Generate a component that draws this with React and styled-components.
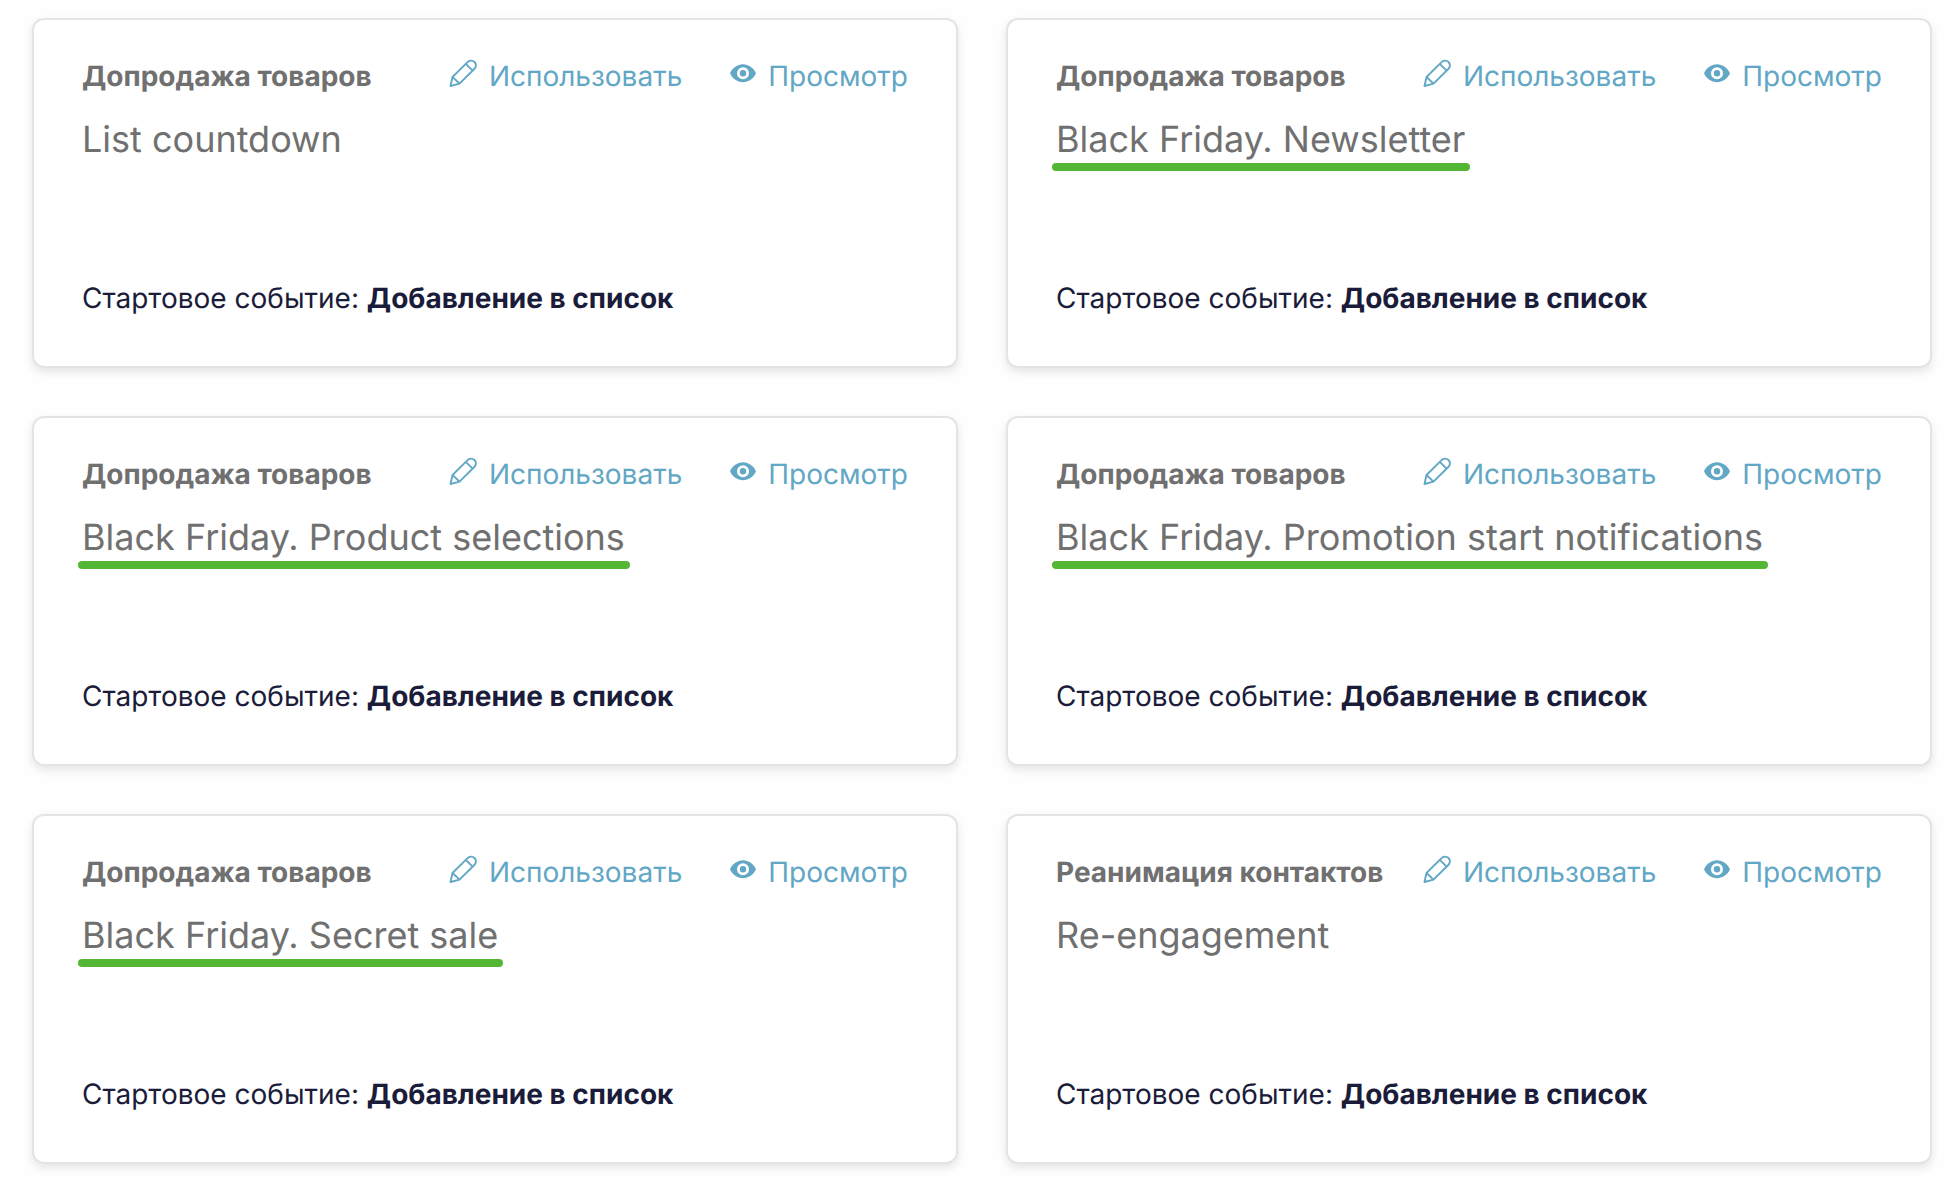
import React from "react";
import styled, { createGlobalStyle } from "styled-components";

const cards = [
  { category: "Допродажа товаров", title: "List countdown" },
  {
    category: "Допродажа товаров",
    title: "Black Friday. Newsletter",
    marked: true,
  },
  {
    category: "Допродажа товаров",
    title: "Black Friday. Product selections",
    marked: true,
  },
  {
    category: "Допродажа товаров",
    title: "Black Friday. Promotion start notifications",
    marked: true,
  },
  {
    category: "Допродажа товаров",
    title: "Black Friday. Secret sale",
    marked: true,
  },
  { category: "Реанимация контактов", title: "Re-engagement" },
];

const PencilIcon = () => (
  <Icon width="28" height="28" viewBox="0 0 28 28" aria-hidden="true">
    <g
      fill="none"
      stroke="currentColor"
      strokeWidth="1.9"
      strokeLinejoin="round"
    >
      <path d="M1.500 27 3.500 18 18.300 3.300C20.300 1.200 23.500 1 25.500 3S27.300 8 25.300 10L10.500 24.600Z" />
      <path d="M16.800 4.800 23.600 11.600M3.500 18l7 6.600" />
    </g>
  </Icon>
);

const EyeIcon = () => (
  <Icon width="26" height="28" viewBox="0 0 26 28" aria-hidden="true">
    <path
      fill="currentColor"
      fillRule="evenodd"
      d="M13 5.200C7.500 5.200 2.400 8.700 0 14.200c2.400 5.500 7.500 9 13 9s10.600-3.500 13-9C23.600 8.700 18.500 5.200 13 5.200Zm0 3a6 6 0 1 1 0 12 6 6 0 0 1 0-12Zm0 2.800a3.200 3.200 0 1 0 0 6.400 3.200 3.200 0 0 0 0-6.400Z"
    />
  </Icon>
);

const TemplateCard = ({ category, title, marked }) => {
  return (
    <Card>
      <Top>
        <Category>{category}</Category>
        <Actions>
          <Action href="#use">
            <PencilIcon />
            <span>Использовать</span>
          </Action>
          <Action href="#preview">
            <EyeIcon />
            <span>Просмотр</span>
          </Action>
        </Actions>
      </Top>
      <Title $marked={marked}>{title}</Title>
      <Event>
        Стартовое событие: <strong>Добавление в список</strong>
      </Event>
    </Card>
  );
};

const App = () => {
  return (
    <>
      <GlobalStyle />
      <Grid>
        {cards.map((card) => (
          <TemplateCard key={card.title} {...card} />
        ))}
      </Grid>
    </>
  );
};

export default App;

const GlobalStyle = createGlobalStyle`
  * {
    box-sizing: border-box;
  }

  body {
    margin: 0;
    background-color: #fefefe;
    font-family: Inter, "Noto Sans", sans-serif;
    text-rendering: geometricPrecision;
  }
`;

const Grid = styled.main`
  display: grid;
  grid-template-columns: repeat(2, minmax(0, 1fr));
  gap: 48px;
  padding: 18px 24px 24px 32px;
`;

const Card = styled.article`
  display: flex;
  flex-direction: column;
  min-height: 350px;
  padding: 38px 48px 50px;
  background-color: #fff;
  border: 2px solid #e4e4e4;
  border-radius: 12px;
  box-shadow: 0 4px 10px rgba(0, 0, 0, 0.1);
`;

const Top = styled.div`
  display: flex;
  justify-content: space-between;
  align-items: center;
`;

const Category = styled.div`
  color: #707070;
  font-size: 28px;
  font-weight: 700;
  line-height: 36px;
  white-space: nowrap;
`;

const Actions = styled.div`
  display: flex;
  gap: 48px;
`;

const Action = styled.a`
  display: flex;
  align-items: flex-start;
  gap: 12px;
  color: #62a7c5;
  font-size: 28px;
  line-height: 36px;
  text-decoration: none;
  white-space: nowrap;

  &:hover {
    color: #3d86a6;
  }
`;

const Icon = styled.svg`
  flex: none;
  margin-top: 1px;
`;

const Title = styled.h2`
  position: relative;
  align-self: flex-start;
  margin: 23px 0 0;
  color: #707070;
  font-size: 36px;
  font-weight: 400;
  line-height: 44px;

  &::after {
    content: "";
    display: ${({ $marked }) => ($marked ? "block" : "none")};
    position: absolute;
    top: 46px;
    left: -4px;
    right: -5px;
    height: 8px;
    border-radius: 4px;
    background-color: #53b735;
  }
`;

const Event = styled.p`
  margin: auto 0 0;
  color: #1a1c3a;
  font-size: 28px;
  line-height: 36px;

  strong {
    font-weight: 700;
  }
`;
